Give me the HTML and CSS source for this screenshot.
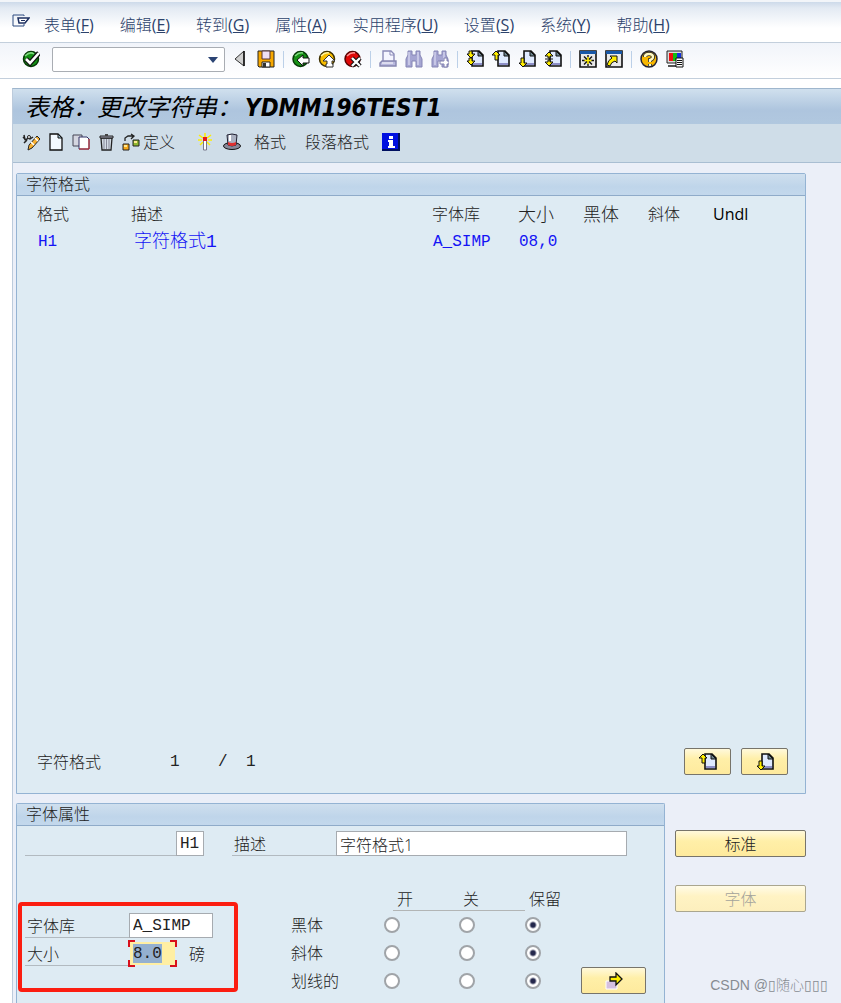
FILE: index.html
```html
<!DOCTYPE html>
<html lang="zh-CN">
<head>
<meta charset="utf-8">
<meta name="viewport" content="width=device-width, initial-scale=1">
<title>表格：更改字符串</title>
<link rel="stylesheet" href="styles.css">
</head>
<body>
<svg class="sprite" aria-hidden="true">
  <symbol id="page" viewBox="0 0 18 18">
    <path d="M6 1h7l4 4v11H6z" fill="#dfeaff" stroke="#111" stroke-width="1.6"/>
    <path d="M7 13h9v2H7z" fill="#8d8fc8"/>
    <path d="M12 1v5h5z" fill="#6d8590" stroke="#111"/>
  </symbol>
  <symbol id="page-up" viewBox="0 0 18 18">
    <use href="#page" width="18" height="18"/>
    <path d="M4 1 8 5H6v5H3V5H0z" fill="#ffee00" stroke="#111"/>
  </symbol>
  <symbol id="page-down" viewBox="0 0 18 18">
    <use href="#page" width="18" height="18"/>
    <path d="M3 8h3v5h3l-4 4-4-4h2z" fill="#ffee00" stroke="#111"/>
  </symbol>
  <symbol id="page-first" viewBox="0 0 18 18">
    <use href="#page" width="18" height="18"/>
    <path d="M3 1h3v3h3L5 8 1 4h2zM3 8h3v3h3l-4 4-4-4h2z" fill="#ffee00" stroke="#111"/>
  </symbol>
  <symbol id="page-last" viewBox="0 0 18 18">
    <use href="#page" width="18" height="18"/>
    <path d="M5 2 9 6H6v2H4V6H1zM4 10h2v2h3l-4 4-4-4h3z" fill="#ffee00" stroke="#111"/>
    <path d="M1 9h8" stroke="#111"/>
  </symbol>
  <symbol id="binoculars" viewBox="0 0 18 18">
    <path d="M3 1h4v4h4V1h4v4l2 4v8h-6v-6H7v6H1V9l2-4z" fill="#a5a5d2" stroke="#8585b5"/>
    <path d="M4 2v13M13 2v13" stroke="#e8e8fa"/>
  </symbol>
</svg>

<nav class="menu" aria-label="菜单">
  <button class="menu-icon" aria-label="窗口菜单">
    <svg width="18" height="14" viewBox="0 0 18 14"><path d="M12 2V1H1v11h11v-2" fill="none" stroke="#2d4a80"/><path d="M6 4h11l-4 5H7z" fill="#fff" stroke="#1d2f60" stroke-width="1.500"/><path d="M9 6.500h4" stroke="#1d2f60"/></svg>
  </button>
  <button>表单<span>(<u>F</u>)</span></button>
  <button>编辑<span>(<u>E</u>)</span></button>
  <button>转到<span>(<u>G</u>)</span></button>
  <button>属性<span>(<u>A</u>)</span></button>
  <button>实用程序<span>(<u>U</u>)</span></button>
  <button>设置<span>(<u>S</u>)</span></button>
  <button>系统<span>(<u>Y</u>)</span></button>
  <button>帮助<span>(<u>H</u>)</span></button>
</nav>

<div class="toolbar">
  <button class="icon" aria-label="回车"><svg viewBox="0 0 18 18"><circle cx="9" cy="9" r="7.500" fill="#159015" stroke="#063806" stroke-width="1.500"/><path d="M3 6q5-5 9-2" stroke="#7fd87f" stroke-width="1.500" fill="none"/><path d="M4 9l4 4 9-10" fill="none" stroke="#111" stroke-width="5"/><path d="M4 9l4 4 9-10" fill="none" stroke="#fff" stroke-width="2.600"/></svg></button>
  <span class="command"><select aria-label="命令"><option></option></select></span>
  <div class="group">
    <button class="icon" aria-label="折叠"><svg viewBox="0 0 18 18"><path d="M13 1v15L4 9z" fill="#d0d0d0" stroke="#333"/><path d="M13 1v15" stroke="#111" stroke-width="1.500"/></svg></button>
    <button class="icon" aria-label="保存"><svg viewBox="0 0 18 18"><path d="M1 1h16v16H2l-1-1z" fill="#f7a800" stroke="#222"/><path d="M5 1h8v8H5z" fill="#efe0f5" stroke="#533"/><path d="M5 12h8v5H5z" fill="#fff" stroke="#222"/><path d="M6 13h3v4H6z" fill="#333"/></svg></button>
  </div>
  <i class="sep"></i>
  <div class="group">
    <button class="icon" aria-label="返回"><svg viewBox="0 0 18 18"><circle cx="8.500" cy="9" r="7.500" fill="#159015" stroke="#063806" stroke-width="1.500"/><path d="M3 6q4-4 8-3" stroke="#7fd87f" stroke-width="1.500" fill="none"/><path d="M5 10l6-5v3h6v5h-6v3z" fill="#fff" stroke="#111"/></svg></button>
    <button class="icon" aria-label="退出"><svg viewBox="0 0 18 18"><circle cx="9" cy="9" r="7.500" fill="#f8bd00" stroke="#3d3000" stroke-width="1.500"/><path d="M3 6q4-4 8-3" stroke="#fff3a0" stroke-width="1.500" fill="none"/><path d="M11 5l6 6h-3v3h1v3H8v-3h1v-3H5z" fill="#fff" stroke="#333"/></svg></button>
    <button class="icon" aria-label="取消"><svg viewBox="0 0 18 18"><circle cx="8.500" cy="9" r="7.500" fill="#e00808" stroke="#500" stroke-width="1.500"/><path d="M3 6q4-4 8-3" stroke="#ff9090" stroke-width="1.500" fill="none"/><path d="M8 8l8 8M16 8l-8 8" stroke="#111" stroke-width="4.500"/><path d="M8 8l8 8M16 8l-8 8" stroke="#fff" stroke-width="2.400"/></svg></button>
  </div>
  <i class="sep"></i>
  <div class="group">
    <button class="icon" aria-label="打印"><svg viewBox="0 0 18 18"><path d="M4 1h8l3 3v8H4z" fill="#f5f5ff" stroke="#8b8bb8" stroke-width="1.400"/><path d="M11 1v4h4" fill="none" stroke="#8b8bb8"/><path d="M3 11h14v5H1v-3z" fill="#b8b8de" stroke="#8585b0" stroke-width="1.400"/><path d="M3 13h11" stroke="#fff"/></svg></button>
    <button class="icon" aria-label="查找"><svg viewBox="0 0 18 18"><use href="#binoculars"/></svg></button>
    <button class="icon" aria-label="继续查找"><svg viewBox="0 0 18 18"><use href="#binoculars"/><path d="M9 11h4V8h3v3h2v3h-2v3h-3v-3H9z" fill="#fff" stroke="#8080b0"/></svg></button>
  </div>
  <i class="sep"></i>
  <div class="group">
    <button class="icon" aria-label="首页"><svg viewBox="0 0 18 18"><use href="#page-first"/></svg></button>
    <button class="icon" aria-label="上一页"><svg viewBox="0 0 18 18"><use href="#page-up"/></svg></button>
    <button class="icon" aria-label="下一页"><svg viewBox="0 0 18 18"><use href="#page-down"/></svg></button>
    <button class="icon" aria-label="末页"><svg viewBox="0 0 18 18"><use href="#page-last"/></svg></button>
  </div>
  <i class="sep"></i>
  <div class="group">
    <button class="icon" aria-label="新建会话"><svg viewBox="0 0 18 18"><path d="M1 1h16v16H1z" fill="#e9e9e9" stroke="#111" stroke-width="1.600"/><path d="M1 1h16v3H1z" fill="#1858a8"/><path d="M9 5v11M3 10.500h12M5 6.500l8 8M13 6.500l-8 8" stroke="#111" stroke-width="1.400"/><path d="M9 7v7M5.500 10.500h7" stroke="#ffee00" stroke-width="1.600"/></svg></button>
    <button class="icon" aria-label="快捷方式"><svg viewBox="0 0 18 18"><path d="M1 1h16v16H1z" fill="#e9e9e9" stroke="#111" stroke-width="1.600"/><path d="M1 1h16v3H1z" fill="#1858a8"/><path d="M5 6h7v7l-2-2q-4 1-5 5l-3-1q1-5 5-7z" fill="#ffee00" stroke="#111"/></svg></button>
  </div>
  <i class="sep"></i>
  <div class="group">
    <button class="icon" aria-label="帮助"><svg viewBox="0 0 18 18"><circle cx="9" cy="9" r="8" fill="#f7b600" stroke="#223" stroke-width="1.500"/><path d="M5 7q0-3 4-3t4 3q0 2-3 3v2M10 14v2" fill="none" stroke="#222" stroke-width="4"/><path d="M5 7q0-3 4-3t4 3q0 2-3 3v2M10 14v2" fill="none" stroke="#fff8c0" stroke-width="2.400"/></svg></button>
    <button class="icon" aria-label="自定义布局"><svg viewBox="0 0 18 18"><path d="M1 1h15v12H1z" fill="#ddd" stroke="#222"/><path d="M3 3h4v8H3z" fill="#f01010"/><path d="M7 3h4v8H7z" fill="#10c010"/><path d="M11 3h4v8h-4z" fill="#1030e0"/><path d="M2 16h9" stroke="#555" stroke-width="2"/><path d="M10 8h7v9h-7z" fill="#fff" stroke="#111"/><path d="M11 10.500h5M11 12.500h5M11 14.500h5" stroke="#111"/></svg></button>
  </div>
</div>

<main class="window">
  <h1 class="title">表格：更改字符串：<span class="name">YDMM196TEST1</span></h1>
  <div class="actions">
    <button class="icon" aria-label="显示/更改"><svg viewBox="0 0 18 18"><path d="M1 4l3 3 2-2 2 1 3-2M2 2l1 5M5 7l-3 3" fill="none" stroke="#222" stroke-width="1.500"/><circle cx="7" cy="4" r="1.500" fill="#fff" stroke="#222"/><path d="M15 3l3 3-8 9-4 2 1-5z" fill="#f7b030" stroke="#222"/><path d="M13 5l3 3M9 9l3 3" stroke="#fff" stroke-width="1.500"/></svg></button>
    <button class="icon" aria-label="创建"><svg viewBox="0 0 18 18"><path d="M3 1h8l4 4v12H3z" fill="#f4faff" stroke="#111" stroke-width="1.300"/><path d="M11 1v4h4z" fill="#9fc0d0" stroke="#111"/></svg></button>
    <button class="icon" aria-label="复制"><svg viewBox="0 0 18 18"><path d="M1 2h9v11H1z" fill="#d4d6e0" stroke="#445"/><path d="M7 4h8l2 2v10H7z" fill="#fff" stroke="#336"/><path d="M17 6v10H7" fill="none" stroke="#c02020"/></svg></button>
    <button class="icon" aria-label="删除"><svg viewBox="0 0 18 18"><path d="M4 5h11l-1 12H5z" fill="#d3dce4" stroke="#222" stroke-width="1.300"/><path d="M7 6v10M9.500 6v10M12 6v10" stroke="#889"/><path d="M3 3h13v2H3z" fill="#aab" stroke="#222"/><path d="M8 1h3v2H8z" fill="#444"/></svg></button>
    <button class="define"><svg class="glyph" viewBox="0 0 18 18"><path d="M3 8V5l3-2h5M9 1l3 2-3 3" fill="none" stroke="#222" stroke-width="1.300"/><path d="M1 11h6v6H1z" fill="#f7a818" stroke="#222"/><path d="M11 7h6v6h-6z" fill="#8fb830" stroke="#222"/><path d="M2 12h3v2H2zM12 8h3v2h-3z" fill="#ffe890"/></svg>定义</button>
    <button class="icon wand" aria-label="激活"><svg viewBox="0 0 18 18"><path d="M9 0v4M3 2l4 3M15 2l-4 3M2 7h4M12 7h4M4 12l3-3M14 12l-3-3" stroke="#ffee00" stroke-width="1.500"/><path d="M7.500 7h3v10h-3z" fill="#fff" stroke="#778"/><path d="M7 4h4v4H7z" fill="#e81818"/></svg></button>
    <button class="icon" aria-label="表头"><svg viewBox="0 0 18 18"><ellipse cx="9" cy="13" rx="8.500" ry="3.500" fill="#889" stroke="#111"/><path d="M4 2q5-2 10 0l-1 10q-4 2-8 0z" fill="#aab0c0" stroke="#223"/><path d="M5 9q4 2 8 0v3q-4 2-8 0z" fill="#e03030"/><path d="M7 2v6" stroke="#fff" stroke-width="2"/></svg></button>
    <button class="text">格式</button>
    <button class="text">段落格式</button>
    <button class="icon" aria-label="信息"><svg viewBox="0 0 18 18"><path d="M0 0h18v18H0z" fill="#0010e0"/><path d="M17 0v17H0" fill="none" stroke="#001060" stroke-width="2"/><path d="M7 3h4v3H7zM6 7h5v6h2v2H6v-2h1V9H6z" fill="#fff"/></svg></button>
  </div>

  <div class="content">
    <section class="panel list">
      <h2>字符格式</h2>
      <table class="formats">
        <colgroup><col class="c-format"><col class="c-desc"><col class="c-family"><col class="c-size"><col class="c-flag"><col class="c-flag"><col class="c-last"></colgroup>
        <thead><tr><th>格式</th><th>描述</th><th>字体库</th><th class="wide">大小</th><th class="wide">黑体</th><th>斜体</th><th class="latin">Undl</th></tr></thead>
        <tbody><tr><td>H1</td><td class="wide">字符格式1</td><td>A_SIMP</td><td>08,0</td><td></td><td></td><td></td></tr></tbody>
      </table>
      <div class="pager">
        <span class="pager-label">字符格式</span><span class="num">1</span><span class="slash">/</span><span class="num">1</span>
        <div class="pager-buttons">
          <button class="btn small" aria-label="上一页"><svg class="glyph" viewBox="0 0 18 18"><use href="#page-up"/></svg></button>
          <button class="btn small" aria-label="下一页"><svg class="glyph" viewBox="0 0 18 18"><use href="#page-down"/></svg></button>
        </div>
      </div>
    </section>

    <div class="lower">
      <section class="panel detail">
        <h2>字体属性</h2>
        <div class="head-row">
          <label class="lined key" for="key"></label><input id="key" class="field code" value="H1" aria-label="格式">
          <label class="lined desc" for="desc">描述</label><input id="desc" class="field grow" value="字符格式1">
        </div>
        <div class="settings">
          <div class="marked">
            <div class="row"><label class="lined" for="family">字体库</label><input id="family" class="field family" value="A_SIMP"></div>
            <div class="row"><label class="lined" for="size">大小</label><span class="focus"><input id="size" class="field size" value="8.0"></span><span class="unit">磅</span></div>
          </div>
          <table class="options">
            <thead><tr><td class="o-name"></td><th class="o-on"><span class="first">开</span></th><th class="o-off"><span>关</span></th><th><span class="plain">保留</span></th></tr></thead>
            <tbody>
              <tr><th>黑体</th><td><input type="radio" name="bold" aria-label="黑体 开"></td><td><input type="radio" name="bold" aria-label="黑体 关"></td><td><input type="radio" name="bold" aria-label="黑体 保留" checked></td></tr>
              <tr><th>斜体</th><td><input type="radio" name="italic" aria-label="斜体 开"></td><td><input type="radio" name="italic" aria-label="斜体 关"></td><td><input type="radio" name="italic" aria-label="斜体 保留" checked></td></tr>
              <tr><th>划线的</th><td><input type="radio" name="underline" aria-label="划线的 开"></td><td><input type="radio" name="underline" aria-label="划线的 关"></td><td><input type="radio" name="underline" aria-label="划线的 保留" checked></td></tr>
            </tbody>
          </table>
          <button class="btn more" aria-label="更多"><svg class="glyph" viewBox="0 0 18 18"><path d="M1 9h11v8H1z" fill="#d5bfe0" stroke="#fff"/><path d="M5 5h6V1l6 6-6 6V9H5z" fill="#ffee00" stroke="#111" stroke-width="1.300"/></svg></button>
        </div>
      </section>
      <div class="side">
        <button class="btn">标准</button>
        <button class="btn" disabled>字体</button>
      </div>
    </div>
  </div>
</main>
<div class="watermark">CSDN @▯随心▯▯▯</div>
</body>
</html>
```
FILE: styles.css
```css
* { box-sizing: border-box; }

body {
  margin: 0;
  min-height: 100vh;
  display: flex;
  flex-direction: column;
  position: relative;
  background: #fff;
  color: #222;
  font: 300 16px/20px "Open Sans", "Noto Sans CJK SC", sans-serif;
}

button, input, select { font: inherit; color: inherit; }
button { padding: 0; border: 0; background: none; white-space: nowrap; }
h1, h2 { margin: 0; }
svg { display: block; }
.sprite { position: absolute; width: 0; height: 0; }
.glyph { width: 18px; height: 18px; }

.menu {
  display: flex;
  align-items: center;
  gap: 26px;
  height: 43px;
  padding: 5px 12px 0;
  border-top: 2px solid #f2f5f9;
  border-bottom: 1px solid #c3cfdc;
  background: linear-gradient(#cddaea, #e3eaf3 6px, #fff 26px);
  color: #2c426b;
}
.menu span { font-weight: 400; }
.menu .menu-icon { margin-right: -12px; padding-bottom: 8px; }

.toolbar {
  display: flex;
  align-items: center;
  gap: 8px;
  height: 36px;
  padding: 0 22px 3px;
  border-bottom: 1px solid #c3cfdc;
  background: linear-gradient(#f1f4fa, #fff);
}
.group { display: flex; gap: 8px; }
.icon, .icon svg { display: block; width: 18px; height: 18px; }
.sep { width: 1px; height: 17px; background: #bcd0e8; }
.command { position: relative; margin: 0 -2px 0 4px; }
.command select {
  display: block;
  width: 173px;
  height: 25px;
  border: 1px solid #a9adb3;
  border-radius: 2px;
  background: #fff;
  appearance: none;
}
.command::after {
  content: "";
  position: absolute;
  right: 7px;
  top: 10px;
  border: 5px solid transparent;
  border-top: 6px solid #2b4474;
  border-bottom: 0;
}

.window {
  flex: 1;
  display: flex;
  flex-direction: column;
  margin: 9px 0 0 12px;
  border-top: 1px solid #9fb6cd;
  border-left: 1px solid #bccbdc;
  background: #ebeff8;
}
.title {
  height: 35px;
  padding-left: 12px;
  background: linear-gradient(#d0e0ee, #aec5de 60%, #b1c8df);
  color: #000;
  font: italic 400 24px/34px "Noto Sans CJK SC", sans-serif;
  white-space: nowrap;
}
.title .name { margin-left: 4px; font-family: "DejaVu Sans Condensed", "DejaVu Sans", sans-serif; font-size: 24px; font-weight: 700; }
.actions {
  display: flex;
  align-items: center;
  gap: 7px;
  height: 39px;
  padding: 0 9px 2px;
  border-bottom: 1px solid #a9bed2;
  background: #cfdde8;
}
.define { display: flex; align-items: center; gap: 3px; }
.wand { margin-left: 14px; margin-right: 2px; }
.text { margin: 0 6px; }

.content {
  flex: 1;
  display: flex;
  flex-direction: column;
  gap: 9px;
  padding: 10px 35px 0 3px;
}
.panel {
  display: flex;
  flex-direction: column;
  border: 1px solid #94b3d3;
  border-radius: 2px 2px 0 0;
  background: #deebf3;
}
.panel h2 {
  height: 22px;
  padding-left: 9px;
  border-bottom: 1px solid #8fabc9;
  background: linear-gradient(#cfdfee, #bfd5ea 60%, #c3d8ec);
  font-size: 16px;
  font-weight: 300;
  line-height: 20px;
}
.list { flex: 1; }

.formats { table-layout: fixed; width: 100%; margin-top: 4px; padding-left: 20px; border-spacing: 0; }
.formats th, .formats td { height: 27px; padding: 0; font-weight: 300; text-align: left; white-space: nowrap; }
.formats td { height: 30px; padding-left: 1px; color: #1414f5; font-family: "Liberation Mono", "Noto Sans CJK SC", monospace; }
.formats .wide { font-size: 18px; }
.formats td.wide { padding-left: 3px; }
.formats .latin { color: #000; font-weight: 400; }
.c-format { width: 94px; }
.c-family { width: 86px; }
.c-size, .c-flag { width: 65px; }
.c-last { width: 92px; }

.pager { display: flex; align-items: center; margin-top: auto; padding: 0 17px 18px 20px; }
.pager-label { width: 133px; }
.num, .slash { width: 48px; font-family: "Liberation Mono", monospace; }
.slash { width: 28px; }
.pager-buttons { display: flex; gap: 10px; margin-left: auto; }

.btn {
  display: flex;
  align-items: center;
  justify-content: center;
  height: 27px;
  border: 1px solid #77746a;
  border-radius: 2px;
  background: linear-gradient(#fff9dc, #ffefa8 40%, #feea9d);
}
.btn.small { width: 47px; }
.btn:disabled { border-color: #aaa68f; background: linear-gradient(#fffbe8, #fff3c4 40%, #fdefbd); color: #a3a39b; }

.lower { display: grid; grid-template-columns: 1fr 131px; gap: 10px; }
.side { display: flex; flex-direction: column; gap: 28px; padding-top: 27px; }
.detail { border-bottom: 0; padding-bottom: 8px; }

.field {
  height: 25px;
  min-width: 0;
  padding: 0 3px;
  border: 1px solid #a6abb0;
  border-radius: 0;
  background: #fff;
}
.field.code, .field.family, .field.size { font-family: "Liberation Mono", monospace; }
.lined { height: 25px; border-bottom: 1px solid #b2bac0; padding: 3px 0 0 2px; white-space: nowrap; }
.head-row { display: flex; padding: 5px 37px 0 8px; }
.key { width: 151px; }
.code { width: 28px; }
.desc { width: 104px; margin-left: 28px; }
.grow { flex: 1; }

.settings { display: flex; align-items: flex-start; margin-top: 31px; padding: 0 18px 0 1px; }
.marked {
  display: flex;
  flex-direction: column;
  gap: 3px;
  flex: none;
  width: 220px;
  height: 90px;
  margin-top: 15px;
  padding: 7px 3px;
  border: 4px solid #fb1d10;
  border-radius: 4px;
}
.row { display: flex; }
.row .lined { width: 104px; }
.family { width: 84px; }
.focus {
  --c: linear-gradient(#d8101c, #d8101c);
  margin: -1px;
  padding: 2px;
  background:
    var(--c) 0 0 / 7px 2px, var(--c) 0 0 / 2px 7px,
    var(--c) 100% 0 / 7px 2px, var(--c) 100% 0 / 2px 7px,
    var(--c) 0 100% / 7px 2px, var(--c) 0 100% / 2px 7px,
    var(--c) 100% 100% / 7px 2px, var(--c) 100% 100% / 2px 7px;
  background-repeat: no-repeat;
}
.field.size {
  display: block;
  width: 45px;
  height: 23px;
  border: 0;
  background: linear-gradient(#94b0d0, #94b0d0) 3px 2px / 29px 19px no-repeat, #ffefa3;
}
.unit { margin: 3px 0 0 13px; }

.options { flex: 1; margin-left: 53px; border-spacing: 0; table-layout: fixed; }
.options th, .options td { height: 28px; padding: 0; font-weight: 300; text-align: left; }
.options thead th, .options thead td { height: 24px; }
.options th span { display: block; height: 24px; padding: 2px 0 0 4px; border-bottom: 1px solid #b2b5b5; }
.options .first { margin-left: 9px; }
.options .plain { border-color: transparent; }
.o-name { width: 93px; }
.o-on { width: 75px; }
.o-off { width: 66px; }
.options input {
  display: block;
  width: 16px;
  height: 16px;
  margin: 0;
  border: 2px solid #a0a4a8;
  border-radius: 50%;
  background: #fff;
  appearance: none;
}
.options input:checked { background: radial-gradient(#24284c 0 2px, #fff 4px); }
.more { flex: none; width: 65px; margin-top: 80px; }

.watermark {
  position: absolute;
  right: 13px;
  bottom: 8px;
  color: #878c92;
  font: 300 14px/20px "Liberation Sans", "Noto Sans CJK SC", sans-serif;
}
```
